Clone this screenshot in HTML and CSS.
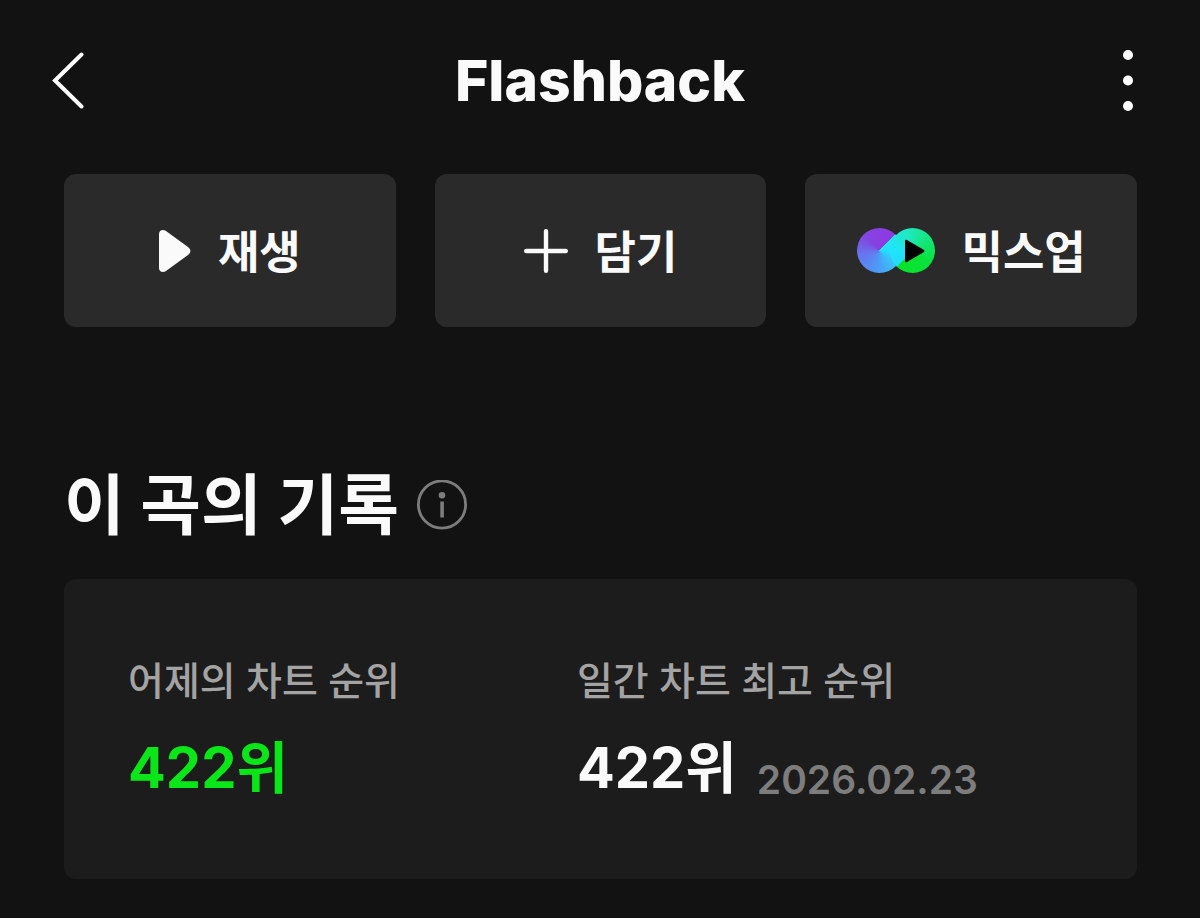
FILE: index.html
```html
<!DOCTYPE html>
<html lang="ko">
<head>
<meta charset="utf-8">
<meta name="viewport" content="width=device-width, initial-scale=1">
<title>Flashback</title>
<link rel="stylesheet" href="styles.css">
</head>
<body>
<header class="topbar">
  <button class="icon-button" type="button" aria-label="뒤로">
    <svg width="34" height="60" viewBox="0 0 34 60" fill="none" stroke="#fff" stroke-width="4" stroke-linecap="round" stroke-linejoin="miter"><path d="M31.5 3.5 5 29.5 31.5 55.5"/></svg>
  </button>
  <h1 class="topbar-title">Flashback</h1>
  <button class="icon-button" type="button" aria-label="더보기">
    <svg width="12" height="62" viewBox="0 0 12 62" fill="#fff"><circle cx="6" cy="5" r="5"/><circle cx="6" cy="30.5" r="5"/><circle cx="6" cy="56" r="5"/></svg>
  </button>
</header>
<main class="content">
  <div class="actions">
    <button class="action" type="button">
      <svg width="32" height="44" viewBox="0 0 32 44" fill="#fafafa"><path d="M0 5C0 1 4 0 7 2L29 18Q34 22 29 26L7 42C4 44 0 43 0 39Z"/></svg>
      <span class="action-label">재생</span>
    </button>
    <button class="action" type="button">
      <svg width="44" height="44" viewBox="0 0 44 44" fill="none" stroke="#fafafa" stroke-width="4.4" stroke-linecap="round"><path d="M22 2.2V41.8M2.2 22H41.8"/></svg>
      <span class="action-label">담기</span>
    </button>
    <button class="action" type="button">
      <span class="mixup">
        <svg class="mixup-play" width="20" height="24" viewBox="0 0 20 24"><path d="M0 2Q0 0 2 1L19 11Q20 12 19 13L2 23Q0 24 0 22Z"/></svg>
      </span>
      <span class="action-label">믹스업</span>
    </button>
  </div>
  <section class="record">
    <div class="record-head">
      <h2 class="record-title">이 곡의 기록</h2>
      <button class="icon-button" type="button" aria-label="정보">
        <svg width="50" height="50" viewBox="0 0 50 50"><circle cx="25" cy="24.5" r="23.6" fill="none" stroke="#7d7d7d" stroke-width="2.8"/><circle cx="25" cy="15.3" r="3.3" fill="#7d7d7d"/><path d="M23.3 21.5h3.6v16h-3.6z" fill="#7d7d7d"/></svg>
      </button>
    </div>
    <dl class="card">
      <div class="stat">
        <dt class="stat-label">어제의 차트 순위</dt>
        <dd class="stat-value stat-value-accent">422위</dd>
      </div>
      <div class="stat">
        <dt class="stat-label">일간 차트 최고 순위</dt>
        <dd class="stat-value">422위 <time class="stat-date" datetime="2026-02-23">2026.02.23</time></dd>
      </div>
    </dl>
  </section>
</main>
</body>
</html>
```
FILE: styles.css
```css
* { box-sizing: border-box; }

body {
  margin: 0;
  background: #121212;
  color: #fafafa;
  font-family: Inter, "Noto Sans CJK KR", sans-serif;
}

h1, h2, dl, dd { margin: 0; }

button {
  border: 0;
  padding: 0;
  color: inherit;
  font-family: inherit;
  cursor: pointer;
}

svg { display: block; flex: none; }

.icon-button { background: none; }

.topbar {
  display: grid;
  grid-template-columns: 84px 1fr 84px;
  align-items: center;
  height: 162px;
  padding: 0 50px;
}

.topbar .icon-button { justify-self: start; }
.topbar .icon-button:last-child { justify-self: end; margin-right: 16px; }

.topbar-title {
  font-size: 57px;
  font-weight: 800;
  line-height: 68px;
  text-align: center;
}

.content { padding: 12px 63px 38px 64px; }

.actions {
  display: grid;
  grid-template-columns: repeat(3, 1fr);
  gap: 39px;
}

.action {
  display: flex;
  align-items: center;
  justify-content: center;
  gap: 27px;
  height: 153px;
  border-radius: 12px;
  background: #2a2a2a;
  font-size: 45px;
  font-weight: 700;
  line-height: 56px;
}

.action-label { padding-top: 4px; }

.mixup { position: relative; display: flex; }

.mixup::before,
.mixup::after {
  content: "";
  width: 45px;
  height: 45px;
  border-radius: 50%;
}

.mixup::before {
  background: conic-gradient(from 45deg, #24e4fa, #24e0fa 50deg, #3cbcf8 95deg, #4b9bf6 140deg, #6973ee 215deg, #8345e2 270deg, #9038e0 360deg);
}

.mixup::after {
  order: 1;
  margin-left: -12px;
  background: conic-gradient(from 225deg, #24dcfa, #20e4fa 45deg, #20e8c0 120deg, #12e670 200deg, #08e23c 260deg, #08e228 360deg);
}

.mixup-play { position: absolute; left: 48px; top: 11px; z-index: 1; }

.record { margin-top: 132px; }

.record-head {
  display: flex;
  align-items: center;
  gap: 18px;
  height: 92px;
}

.record-title {
  font-size: 66px;
  font-weight: 700;
  line-height: 92px;
}

.card {
  display: grid;
  grid-template-columns: 19fr 21fr;
  margin-top: 28px;
  height: 300px;
  padding: 72px 64px;
  border-radius: 12px;
  background: #1c1c1c;
}

.stat { white-space: nowrap; }

.stat-label {
  color: #a3a3a3;
  font-size: 39px;
  font-weight: 500;
  line-height: 60px;
}

.stat-value {
  display: flex;
  align-items: flex-end;
  gap: 20px;
  margin-top: 21px;
  font-size: 56px;
  font-weight: 700;
  line-height: 72px;
}

.stat-value-accent { color: #0be618; }

.stat-date {
  color: #7d7d7d;
  font-size: 39px;
  font-weight: 600;
  line-height: 48px;
}
```
